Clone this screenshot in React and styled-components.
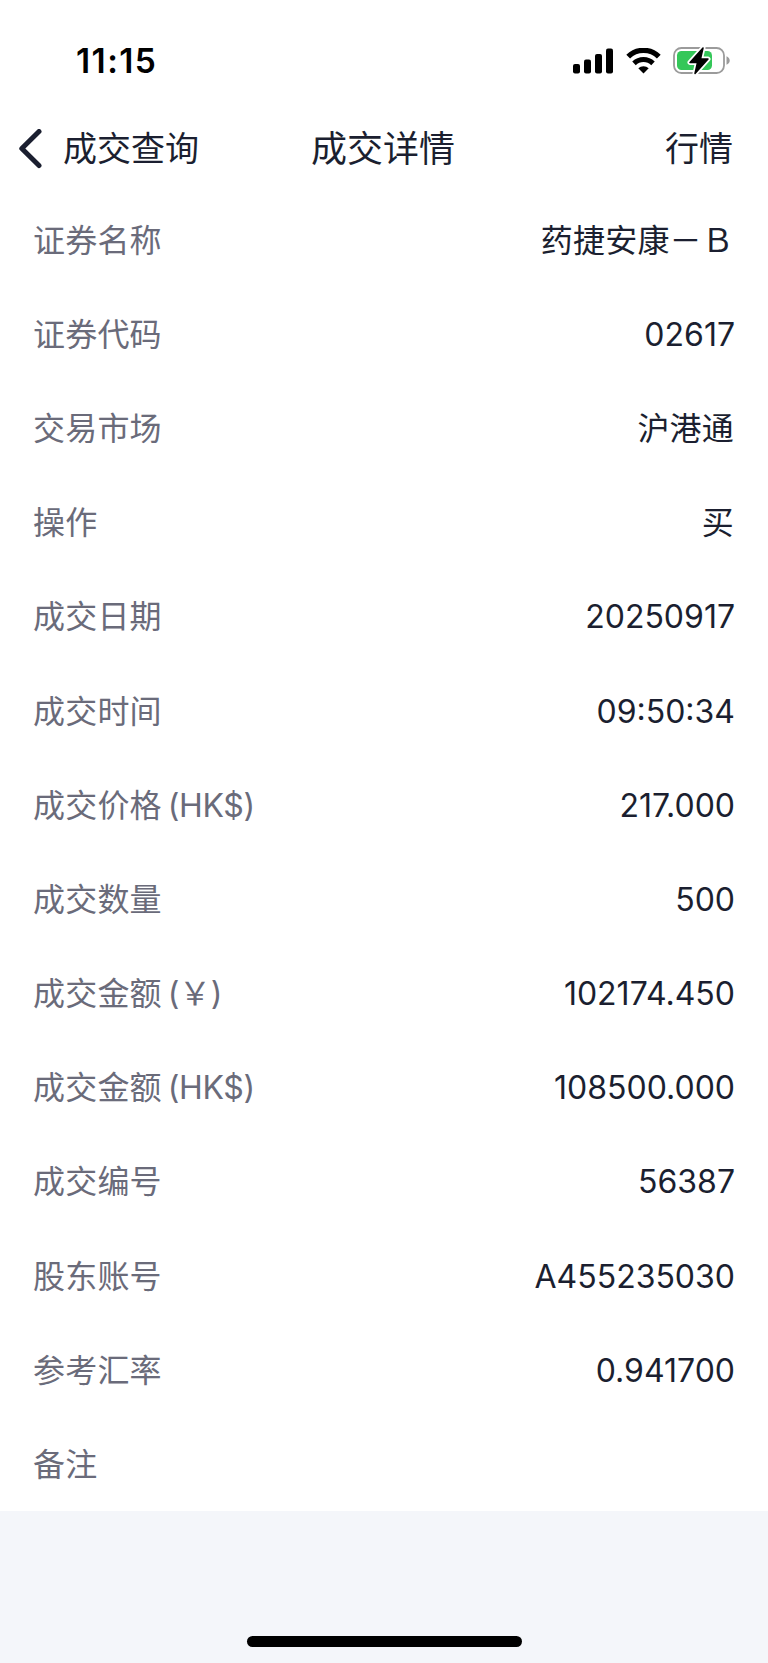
import React from "react";
import styled, {createGlobalStyle} from "styled-components";

const rows = [
	{label: "证券名称", value: "药捷安康", suffix: "－Ｂ"},
	{label: "证券代码", value: "02617"},
	{label: "交易市场", value: "沪港通", cjk: true},
	{label: "操作", value: "买", cjk: true},
	{label: "成交日期", value: "20250917"},
	{label: "成交时间", value: "09:50:34"},
	{label: "成交价格", unit: "(HK$)", value: "217.000"},
	{label: "成交数量", value: "500"},
	{label: "成交金额", unit: "(￥)", value: "102174.450"},
	{label: "成交金额", unit: "(HK$)", value: "108500.000"},
	{label: "成交编号", value: "56387"},
	{label: "股东账号", value: "A455235030"},
	{label: "参考汇率", value: "0.941700"},
	{label: "备注", value: ""},
]

function Signal() {
	return (
		<svg width="40" height="26" viewBox="0 0 40 26">
			<rect x="0" y="16" width="7" height="9.5" rx="2" />
			<rect x="11" y="11.5" width="7" height="14" rx="2" />
			<rect x="22" y="6" width="7" height="19.5" rx="2" />
			<rect x="33" y="0.5" width="7" height="25" rx="2" />
		</svg>
	)
}

function Wifi() {
	return (
		<svg width="35" height="26" viewBox="0 0 35 26">
			<path d="M2.2 8.6a22 22 0 0 1 30.6 0" fill="none" stroke="#000" strokeWidth="5.4" />
			<path d="M8 15.400a13.6 13.6 0 0 1 19 0" fill="none" stroke="#000" strokeWidth="5" />
			<path d="M17.5 25.5l-5.2-5.2a7.6 7.6 0 0 1 10.4 0z" />
		</svg>
	)
}

function Battery() {
	return (
		<svg width="58" height="28" viewBox="0 0 58 28">
			<rect x="1" y="1" width="50" height="25" rx="7.5" fill="#fff" stroke="#9b9b9b" strokeWidth="1.8" />
			<path d="M53.5 9.200c2 .8 3.200 2.300 3.200 4.300s-1.200 3.500-3.200 4.300z" fill="#9b9b9b" />
			<rect x="4" y="4" width="35" height="19" rx="4.5" fill="#34c759" />
			<path d="M30 1L17 15.500h7.500L22 26.500 35 12h-7.500z" stroke="#fff" strokeWidth="5" strokeLinejoin="round" />
			<path d="M30 1L17 15.500h7.500L22 26.500 35 12h-7.500z" stroke="#000" strokeWidth="1.5" strokeLinejoin="round" />
		</svg>
	)
}

export default function App() {
	return (
		<Page>
			<GlobalStyle />
			<StatusBar>
				<Time>11:15</Time>
				<StatusIcons>
					<Signal />
					<Wifi />
					<Battery />
				</StatusIcons>
			</StatusBar>
			<Header>
				<Back>
					<svg width="24" height="40" viewBox="0 0 24 40">
						<path d="M21 2.500L3.800 19.500 21 36.500" fill="none" stroke="#1b1f30" strokeWidth="5" strokeLinecap="round" strokeLinejoin="round" />
					</svg>
					<span>成交查询</span>
				</Back>
				<Title>成交详情</Title>
				<Quote>行情</Quote>
			</Header>
			<List>
				{rows.map((row, index) => (
					<Row key={index}>
						<Label>
							{row.label}
							{row.unit && <Unit>{row.unit}</Unit>}
						</Label>
						<Value $cjk={row.cjk || row.suffix}>
							{row.value}
							{row.suffix}
						</Value>
					</Row>
				))}
			</List>
			<Footer>
				<HomeBar />
			</Footer>
		</Page>
	)
}

const GlobalStyle = createGlobalStyle`
body {
margin: 0;
background: #f4f6fa;
}
`
const Page = styled.div`
display: flex;
flex-direction: column;
width: 768px;
height: 1663px;
overflow: hidden;
background: #ffffff;
color: #1b1f30;
font-family: Inter, "Noto Sans CJK SC", sans-serif;
`
const StatusBar = styled.div`
display: flex;
justify-content: space-between;
align-items: center;
box-sizing: border-box;
height: 104px;
padding: 18px 37px 0 76px;
color: #000000;
`
const Time = styled.div`
font-size: 33.5px;
font-weight: 600;
line-height: 40px;
letter-spacing: 1.4px;
`
const StatusIcons = styled.div`
display: flex;
align-items: center;
gap: 12.5px;
`
const Header = styled.div`
display: grid;
grid-template-columns: 1fr auto 1fr;
align-items: center;
box-sizing: border-box;
height: 88px;
padding: 1px 35px 0 18px;
font-size: 34px;
line-height: 40px;
`
const Back = styled.div`
display: flex;
align-items: center;
gap: 21px;
margin-right: -16px;
`
const Title = styled.div`
padding-left: 15px;
font-size: 36px;
`
const Quote = styled.div`
text-align: right;
`
const List = styled.div`
display: flex;
flex-direction: column;
`
const Row = styled.div`
display: flex;
justify-content: space-between;
align-items: center;
box-sizing: border-box;
height: 94.2px;
padding: 3px 33px 0 33px;
font-size: 32px;
line-height: 40px;
`
const Label = styled.div`
display: flex;
color: #6a6b7a;
letter-spacing: 0.2px;
`
const Unit = styled.span`
margin-left: 6px;
letter-spacing: -0.4px;
`
const Value = styled.div`
padding-right: ${props => props.$cjk? "1px": "0"};
letter-spacing: ${props => props.$cjk? "0.2px": "0"};
`
const Footer = styled.div`
display: flex;
flex: 1;
justify-content: center;
align-items: flex-end;
padding-bottom: 16px;
background: #f4f6fa;
`
const HomeBar = styled.div`
width: 275px;
height: 11px;
border-radius: 6px;
background: #000000;
`
